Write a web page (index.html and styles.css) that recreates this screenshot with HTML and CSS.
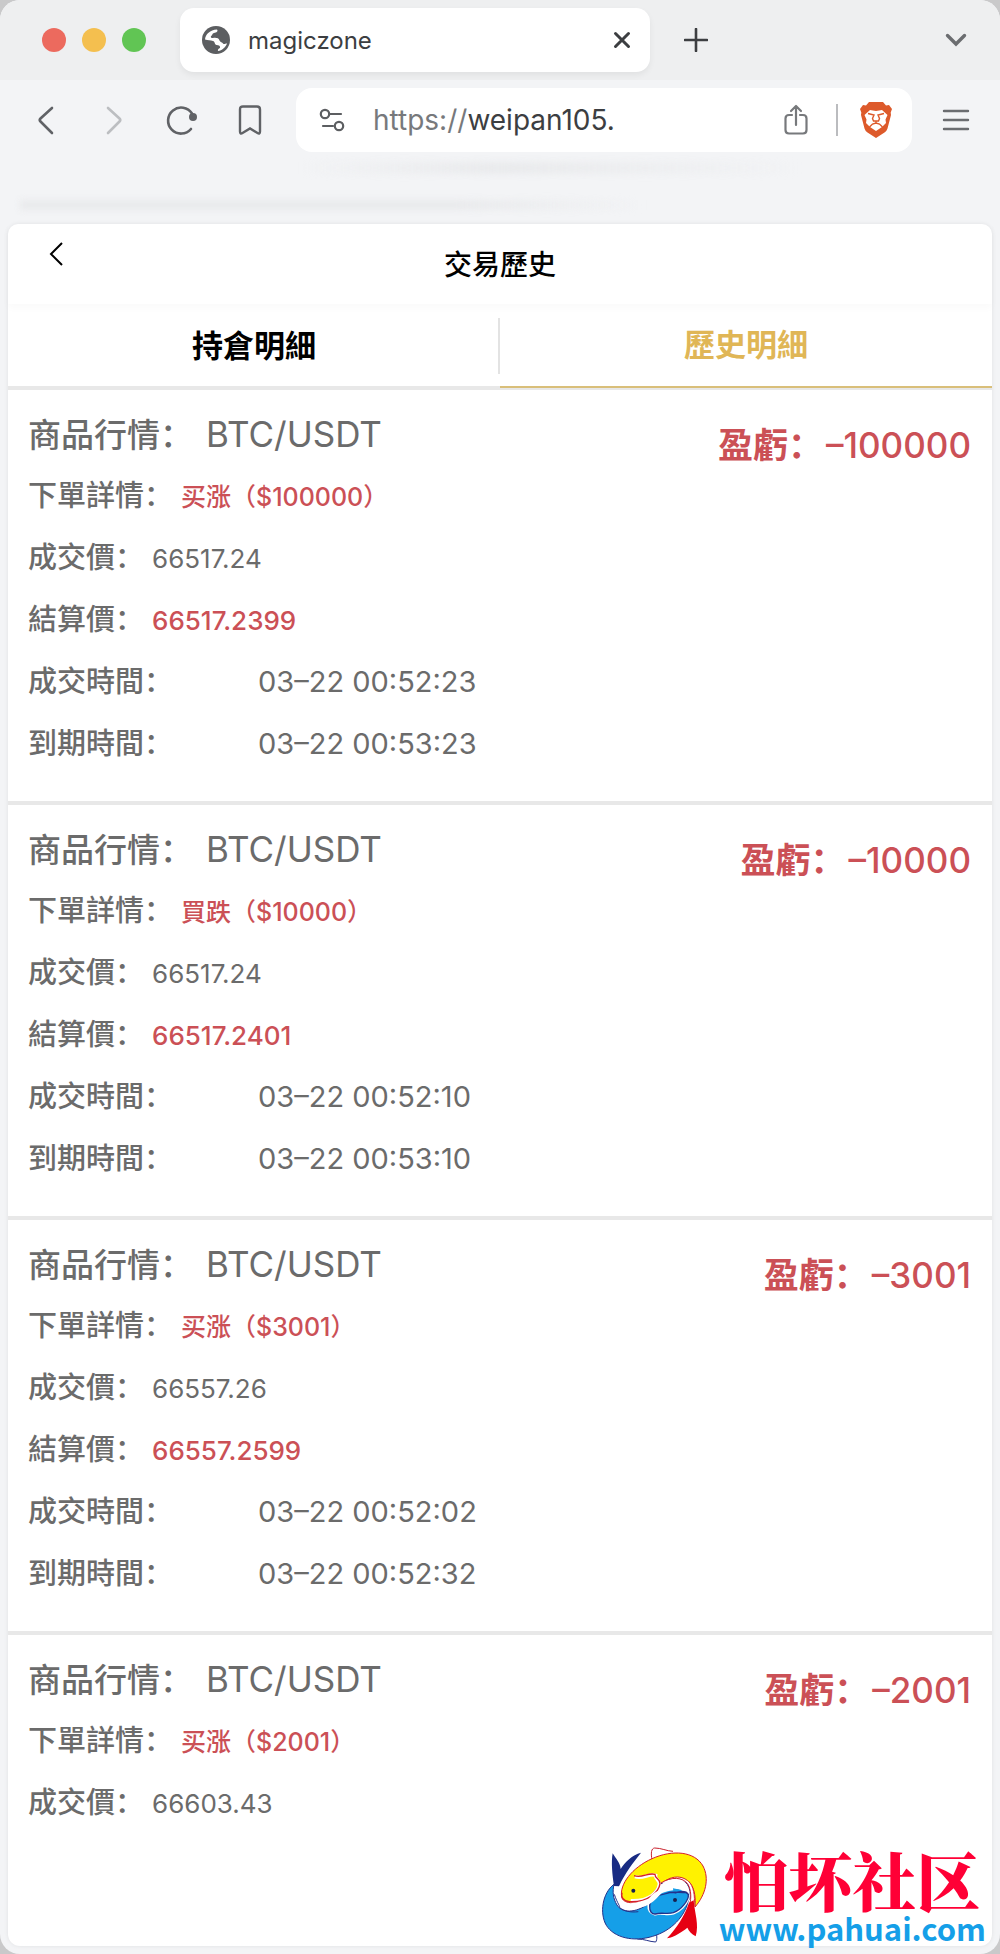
FILE: index.html
```html
<!DOCTYPE html>
<html lang="zh-CN">
<head>
    <meta charset="UTF-8">
    <meta name="viewport" content="width=device-width, initial-scale=1.0">
    <title>交易歷史</title>
    <link rel="stylesheet" href="styles.css">
</head>
<body>
<div class="window">
    <!-- Tab strip -->
    <div class="tabstrip">
        <div class="lights">
            <button class="light red" aria-label="Close window"></button>
            <button class="light yellow" aria-label="Minimize"></button>
            <button class="light green" aria-label="Full screen"></button>
        </div>
        <div class="browser-tab">
            <svg width="28" height="28" viewBox="0 0 28 28">
                <circle cx="14" cy="14" r="14" fill="#5c5e61"/>
                <path d="M3 13.500C3.500 8 8 4 15 3.500c1.500 2-.5 3-3 3.500-2 .5-1.500 2.500-3 3-.5 1.500 0 2 2 2 3-.5 6 0 6.500 2.500.5 2 3 1.500 3.500 3 1 1.500 3-.5 4 0C23.500 21.500 20 24.500 16 25c-.5-1.500.5-2.500 2-3 .5-2-1-3-3.500-3-2-.5-1.500-3.500-3.500-4-2.500-1-5-.5-8-1.500z" fill="#fff"/>
                <path d="M3.500 16c2 .5 5 .5 6 2 .5 1.500 2.500 1 3 2.500-.5 1.500-2 2-1.500 4C7 24 4 20.500 3.500 16z" fill="#5c5e61"/>
            </svg>
            <span class="tab-name">magiczone</span>
            <button class="icon-btn" aria-label="Close tab">
                <svg width="18" height="18" viewBox="0 0 18 18"><path d="M2.500 2.500l13 13m0-13l-13 13" stroke="#3c3e41" stroke-width="3" stroke-linecap="round"/></svg>
            </button>
        </div>
        <button class="icon-btn" aria-label="New tab">
            <svg width="24" height="24" viewBox="0 0 24 24"><path d="M12 1v22M1 12h22" stroke="#3c3e41" stroke-width="2.600" stroke-linecap="round"/></svg>
        </button>
        <button class="icon-btn tab-search" aria-label="Search tabs">
            <svg width="22" height="14" viewBox="0 0 22 14"><path d="M2.500 2.500L11 11l8.500-8.500" fill="none" stroke="#6b6d70" stroke-width="3.400" stroke-linecap="round"/></svg>
        </button>
    </div>

    <!-- Navigation and address -->
    <div class="toolbar">
        <div class="nav-buttons">
            <button class="icon-btn" aria-label="Back">
                <svg width="32" height="32" viewBox="0 0 32 32"><path d="M22 4L10.500 14.500q-1.500 1.500 0 3L22 29" fill="none" stroke="#606266" stroke-width="2.600" stroke-linecap="round"/></svg>
            </button>
            <button class="icon-btn" aria-label="Forward">
                <svg width="32" height="32" viewBox="0 0 32 32"><path d="M10 4l11.500 10.500q1.500 1.500 0 3L10 29" fill="none" stroke="#bcbec1" stroke-width="2.600" stroke-linecap="round"/></svg>
            </button>
            <button class="icon-btn" aria-label="Reload">
                <svg width="32" height="32" viewBox="0 0 32 32"><path d="M26 9.500A13 13 0 1 0 25 25" fill="none" stroke="#606266" stroke-width="2.600" stroke-linecap="round"/><circle cx="27" cy="13" r="4" fill="#606266"/></svg>
            </button>
            <button class="icon-btn" aria-label="Bookmark">
                <svg width="32" height="32" viewBox="0 0 32 32"><path d="M9 2.500h14q3 0 3 3v22q0 3-2.500 1.500L16 24.500 8.500 29Q6 30.500 6 27.500v-22q0-3 3-3z" fill="none" stroke="#606266" stroke-width="2.400"/></svg>
            </button>
        </div>
        <div class="address">
            <svg width="26" height="24" viewBox="0 0 26 24" fill="none" stroke="#5c5e61" stroke-width="2.200" stroke-linecap="round"><circle cx="6" cy="6" r="4.200"/><path d="M11 6h11M4 18h10"/><circle cx="20" cy="18" r="4.200"/></svg>
            <label class="scheme" for="url">https://</label>
            <input class="url" id="url" type="text" value="weipan105.">
            <button class="icon-btn" aria-label="Share">
                <svg width="24" height="32" viewBox="0 0 24 32" fill="none" stroke="#77797c" stroke-width="2.200" stroke-linecap="round" stroke-linejoin="round"><path d="M8 11H5q-3.500 0-3.500 3.500V26q0 3.500 3.500 3.500h14q3.500 0 3.500-3.500V14.500Q22.500 11 19 11h-3M12 21V3M7 7l5-5 5 5"/></svg>
            </button>
            <span class="address-line"></span>
            <button class="icon-btn" aria-label="Brave Shields">
                <svg width="32" height="36" viewBox="0 0 32 36">
                    <path d="M9 0h14l3 3.500 3-.5 3 4-1.300 3.500L31 13l-3.500 13.500q-.7 2.500-3 4L16 36l-8.500-5.500q-2.300-1.500-3-4L1 13l.300-2.500L0 7l3-4 3 .500z" fill="#dd5a2b"/>
                    <path d="M10 8l6 1 6-1 5.500 5-2 4.500.5 3.500-4 4L16 29l-6-4-4-4 .500-3.500-2-4.500z" fill="#fff"/>
                    <path d="M8 11.500l6 1.500-1.500 3.500 1 2.500h5l1-2.500-1.500-3.500 6-1.500M16 19v3M9.500 25l3-3 3.500-1 3.500 1 3 3" fill="none" stroke="#dd5a2b" stroke-width="1.400"/>
                    <path d="M12.500 24.500L16 22l3.500 2.500L16 27z" fill="#fff"/>
                </svg>
            </button>
        </div>
        <button class="icon-btn" aria-label="Menu">
            <svg width="28" height="24" viewBox="0 0 28 24"><path d="M2 3h24M2 12h24M2 21h24" stroke="#6b6d70" stroke-width="2.400" stroke-linecap="round"/></svg>
        </button>
    </div>
    <div class="bookmarks"></div>

    <!-- The page itself -->
    <main class="page">
        <header class="page-head">
            <a class="back" href="#" aria-label="返回">
                <svg width="14" height="24" viewBox="0 0 14 24"><path d="M13 1L2 12l11 11" fill="none" stroke="#000" stroke-width="2"/></svg>
            </a>
            <h1>交易歷史</h1>
        </header>
        <nav class="tabs">
            <button class="tab">持倉明細</button>
            <button class="tab active">歷史明細</button>
        </nav>

        <section class="record">
            <dl class="details">
                <div class="row title"><dt>商品行情：</dt><dd>BTC/USDT</dd></div>
                <div class="row"><dt>下單詳情：</dt><dd class="loss">买涨（$100000）</dd></div>
                <div class="row"><dt>成交價：</dt><dd>66517.24</dd></div>
                <div class="row"><dt>結算價：</dt><dd class="loss">66517.2399</dd></div>
                <div class="row time"><dt>成交時間：</dt><dd>03–22 00:52:23</dd></div>
                <div class="row time"><dt>到期時間：</dt><dd>03–22 00:53:23</dd></div>
            </dl>
            <p class="profit">盈虧：<span>–100000</span></p>
        </section>

        <section class="record">
            <dl class="details">
                <div class="row title"><dt>商品行情：</dt><dd>BTC/USDT</dd></div>
                <div class="row"><dt>下單詳情：</dt><dd class="loss">買跌（$10000）</dd></div>
                <div class="row"><dt>成交價：</dt><dd>66517.24</dd></div>
                <div class="row"><dt>結算價：</dt><dd class="loss">66517.2401</dd></div>
                <div class="row time"><dt>成交時間：</dt><dd>03–22 00:52:10</dd></div>
                <div class="row time"><dt>到期時間：</dt><dd>03–22 00:53:10</dd></div>
            </dl>
            <p class="profit">盈虧：<span>–10000</span></p>
        </section>

        <section class="record">
            <dl class="details">
                <div class="row title"><dt>商品行情：</dt><dd>BTC/USDT</dd></div>
                <div class="row"><dt>下單詳情：</dt><dd class="loss">买涨（$3001）</dd></div>
                <div class="row"><dt>成交價：</dt><dd>66557.26</dd></div>
                <div class="row"><dt>結算價：</dt><dd class="loss">66557.2599</dd></div>
                <div class="row time"><dt>成交時間：</dt><dd>03–22 00:52:02</dd></div>
                <div class="row time"><dt>到期時間：</dt><dd>03–22 00:52:32</dd></div>
            </dl>
            <p class="profit">盈虧：<span>–3001</span></p>
        </section>

        <section class="record">
            <dl class="details">
                <div class="row title"><dt>商品行情：</dt><dd>BTC/USDT</dd></div>
                <div class="row"><dt>下單詳情：</dt><dd class="loss">买涨（$2001）</dd></div>
                <div class="row"><dt>成交價：</dt><dd>66603.43</dd></div>
            </dl>
            <p class="profit">盈虧：<span>–2001</span></p>
        </section>
    </main>

    <!-- Site watermark -->
    <div class="watermark">
        <svg width="120" height="110" viewBox="0 0 360 330">
            <!-- fins -->
            <path d="M174 57C170 35 172 22 182 21c20 0 35 9 55 10" fill="#fff" stroke="#c9202c" stroke-width="3"/>
            <path d="M130 294c22 0 35 8 55 9 6-8 3-22 0-34" fill="#fff" stroke="#24328a" stroke-width="3"/>
            <!-- yellow fish -->
            <path d="M83 168C76 130 114 80 174 53c62-28 128-22 153 22 20 38 8 86-24 123 5-55-15-88-52-90-27 0-44 15-61 31-18 29-45 44-80 46-17-1-25-8-27-17z" fill="#fff200" stroke="#d51f2b" stroke-width="3"/>
            <path d="M123 107c24 9 42-11 62-4-3 13 13 13 11 27-3 21-29 52-86 49" fill="none" stroke="#fff" stroke-width="10"/>
            <path d="M120 104c25 9 40-10 63-4-1 13 16 12 15 28-3 24-35 57-92 54-20-3-25-15-22-27" fill="none" stroke="#d51f2b" stroke-width="4"/>
            <circle cx="118" cy="149" r="6" fill="#17204d"/>
            <!-- blue fish -->
            <path d="M60 130C25 156 16 217 37 253c23 37 81 51 139 33 58-17 98-62 107-108-2-19-13-27-31-31-27-2-68 10-85 37-30 28-80 38-98 8-12-20-14-40-9-62z" fill="#159fe8" stroke="#24328a" stroke-width="3"/>
            <path d="M237 142c-18 2-37 8-52 18-23 14-28 51-2 58 22-6 35 3 55-3 18-6 36-24 43-43 3-16-7-24-18-25" fill="#159fe8" stroke="#fff" stroke-width="11"/>
            <path d="M278 154c-19 3-41-5-63 4-25 4-47 18-48 37-1 17 7 25 17 24 22-6 34 2 54-4 24-8 47-38 45-55-7-10-24-10-41-4" fill="#159fe8" stroke="#24328a" stroke-width="4"/>
            <circle cx="243" cy="177" r="6" fill="#17204d"/>
            <!-- white gap between the bodies and the inner fins -->
            <path d="M72 164c2 31 29 37 59 31 63-3 75-83 128-77 14 3 23 12 28 29" fill="none" stroke="#fff" stroke-width="10"/>
            <path d="M61 160c10 30 18 35 15 39 14 12 35 16 57 13M201 128c31-20 66-18 79 2 8 11 11 31 8 47" fill="none" stroke="#24328a" stroke-width="3"/>
            <path d="M201 126c31-20 66-18 81 4 10 18 10 42 5 60l13 5c4-31-1-60-17-75" fill="#fff" stroke="#d51f2b" stroke-width="3"/>
            <!-- tails -->
            <path d="M60 135C55 101 51 63 56 37c10 17 23 29 24 47 12-20 35-43 61-49-23 30-47 59-66 101z" fill="#182b83"/>
            <path d="M285 185l14-7c3 40 17 73 6 108-13-7-20-16-25-26-17 13-36 27-61 32 31-34 52-66 66-107z" fill="#e60012"/>
        </svg>
        <p class="wm-text">
            <strong class="wm-name">怕坏社区</strong>
            <a class="wm-link" href="#">www.pahuai.com</a>
        </p>
    </div>
</div>
</body>
</html>
```
FILE: styles.css
```css
* {
    box-sizing: border-box;
}
body {
    margin: 0;
    background-color: #c9c9ca;
    font-family: Inter, "Noto Sans CJK SC", sans-serif;
    color: #6b6b6b;
}
button {
    border: 0;
    padding: 0;
    background: none;
    font-family: inherit;
    cursor: pointer;
}
h1, p, dl, dd {
    margin: 0;
}
svg {
    display: block;
    flex-shrink: 0;
}
.window {
    position: relative;
    display: flex;
    flex-direction: column;
    min-height: 100vh;
    padding-bottom: 8px;
    background-color: #f3f4f6;
    border-radius: 20px;
    overflow: hidden;
}

/* Tab strip */
.tabstrip {
    display: flex;
    align-items: center;
    height: 80px;
    padding: 0 33px 0 42px;
    background-color: #eeeff0;
}
.lights {
    display: flex;
    gap: 16px;
    width: 138px;
}
.light {
    width: 24px;
    height: 24px;
    border-radius: 50%;
}
.red {
    background-color: #ec6a5e;
}
.yellow {
    background-color: #f4bf4f;
}
.green {
    background-color: #61c554;
}
.browser-tab {
    display: flex;
    align-items: center;
    flex: 0 1 470px;
    height: 64px;
    margin-right: 34px;
    padding: 0 19px 0 22px;
    background-color: #fff;
    border-radius: 14px;
    box-shadow: 0 3px 6px rgba(0, 0, 0, 0.06);
}
.tab-name {
    flex: 1;
    padding-left: 18px;
    font-size: 24px;
    color: #3c3e41;
}
.tab-search {
    margin-left: auto;
}

/* Toolbar */
.toolbar {
    display: flex;
    align-items: center;
    height: 80px;
    padding: 0 30px 0 30px;
}
.nav-buttons {
    display: flex;
    gap: 36px;
    width: 266px;
}
.address {
    display: flex;
    align-items: center;
    flex: 1;
    min-width: 0;
    height: 64px;
    margin-right: 30px;
    padding: 0 20px 0 23px;
    background-color: #fff;
    border-radius: 16px;
}
.scheme, .url {
    font-size: 28px;
}
.scheme {
    padding-left: 28px;
    color: #77797c;
}
.url {
    flex: 1;
    min-width: 0;
    padding: 0;
    border: 0;
    outline: none;
    background: none;
    font-family: inherit;
    color: #3c3e41;
}
.address-line {
    width: 2px;
    height: 32px;
    margin: 0 22px 0 28px;
    background-color: #bbbcbf;
}
/* Faded bookmarks bar */
.bookmarks {
    height: 48px;
    margin: 2px 200px 14px 20px;
    background:
        linear-gradient(to right, #e9eaec, #e9eaec 70%, #f3f4f600) 0 100% / 80% 10px no-repeat,
        linear-gradient(to right, #f3f4f600, #e9eaec 40%, #f3f4f600) 100% 0 / 64% 12px no-repeat;
    filter: blur(3px);
}

/* Page */
.page {
    flex: 1;
    margin: 0 8px;
    background-color: #fff;
    border-radius: 10px 10px 12px 12px;
    box-shadow: 0 0 4px rgba(0, 0, 0, 0.08);
}
.page-head {
    display: grid;
    grid-template-columns: 1fr auto 1fr;
    height: 80px;
    padding: 18px 41px 0;
    box-shadow: 0 4px 8px rgba(0, 0, 0, 0.025);
}
.page-head h1 {
    padding-top: 3px;
    font-size: 28px;
    line-height: 40px;
    font-weight: 500;
    color: #000;
}
.back {
    justify-self: start;
}
.tabs {
    display: flex;
    height: 86px;
    border-bottom: 4px solid #e8e8e8;
}
.tab {
    flex: 1;
    height: 84px;
    padding-bottom: 6px;
    font-size: 31px;
    font-weight: 600;
    color: #000;
    background: linear-gradient(#e3e3e3, #e3e3e3) 100% 14px / 2px 56px no-repeat;
}
.tab.active {
    color: #e0b656;
    background: none;
    border-bottom: 2px solid #d9bf7a;
}

/* One trade */
.record {
    display: flex;
    justify-content: space-between;
    padding: 13px 21px 26px 20px;
    border-bottom: 4px solid #e8e8e8;
}
.record:last-child {
    border-bottom: 0;
}
.row {
    display: flex;
    align-items: baseline;
    gap: 8px;
    height: 62px;
    font-size: 29px;
    line-height: 62px;
}
.row dt {
    font-weight: 500;
}
.row dd {
    font-size: 26px;
}
.title {
    gap: 13px;
    font-size: 33px;
}
.row.title dd {
    font-size: 35px;
}
.time dt {
    width: 222px;
}
.row.time dd {
    font-size: 29px;
}
.row .loss {
    font-weight: 500;
    color: #cb5056;
}
.row:nth-child(2) .loss {
    font-size: 25px;
}
.profit {
    display: flex;
    gap: 3px;
    height: 84px;
    line-height: 84px;
    font-size: 35px;
    font-weight: 600;
    color: #cb5056;
}
.profit span {
    font-weight: 500;
}

/* Watermark lies over the corner of the page */
.watermark {
    position: absolute;
    right: 14px;
    bottom: 3px;
    display: flex;
    align-items: center;
    gap: 5px;
}
.wm-text {
    display: flex;
    flex-direction: column;
    align-items: center;
}
.wm-name {
    font-family: "Noto Serif CJK SC", "Noto Sans CJK SC", serif;
    font-size: 64px;
    line-height: 64px;
    font-weight: 900;
    color: #ff0036;
}
.wm-link {
    font-family: "Noto Sans CJK SC", sans-serif;
    font-size: 31px;
    line-height: 36px;
    font-weight: 700;
    color: #159fe8;
    text-decoration: none;
}
```
